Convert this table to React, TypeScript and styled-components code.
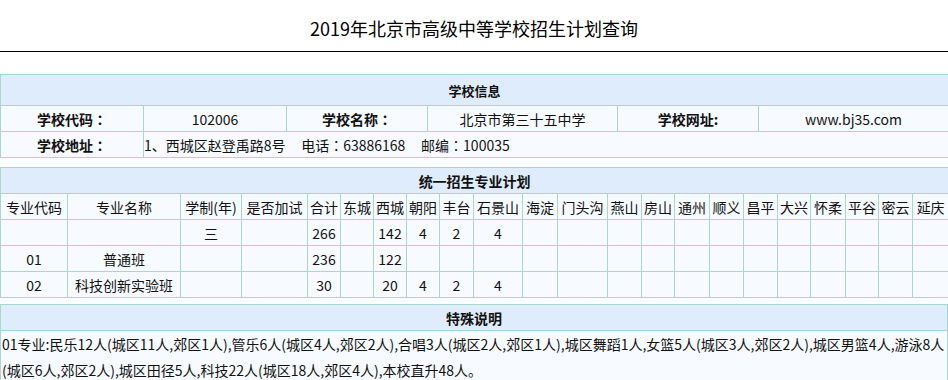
import React from "react";
import styled, { createGlobalStyle } from "styled-components";

const GlobalStyle = createGlobalStyle`
  html, body { margin: 0; padding: 0; background: #ffffff; }
  body {
    font-family: "Noto Sans CJK SC", "Microsoft YaHei", sans-serif;
    color: #111111;
  }
`;

const Page = styled.div`
  width: 948px;
  display: flex;
  flex-direction: column;
`;

const TitleBar = styled.h1`
  margin: 0;
  height: 52px;
  box-sizing: border-box;
  padding-top: 5px;
  display: flex;
  align-items: center;
  justify-content: center;
  font-size: 18px;
  font-weight: normal;
  color: #000;
  border-bottom: 1px solid #000;
`;

const Tables = styled.div`
  display: flex;
  flex-direction: column;
  padding-top: 22px;
`;

const Table = styled.table<{ $gap?: number }>`
  width: 948px;
  table-layout: fixed;
  border-collapse: collapse;
  margin-top: ${(p) => p.$gap ?? 0}px;
  font-size: 14px;
  background: #f7fbff;
`;

const HeadCell = styled.th<{ $h?: number; $fs?: number }>`
  height: ${(p) => p.$h ?? 25}px;
  padding: 0;
  background: #dfecfb;
  border: 1px solid #a9d6cd;
  font-size: ${(p) => p.$fs ?? 14}px;
  font-weight: bold;
  text-align: center;
  color: #111;
`;

const Cell = styled.td<{ $bold?: boolean; $align?: "left" | "center" }>`
  height: 25px;
  padding: 0;
  border: 1px solid #a9d6cd;
  text-align: ${(p) => p.$align ?? "center"};
  font-weight: ${(p) => (p.$bold ? "bold" : "normal")};
  white-space: nowrap;
  overflow: hidden;
  color: #111;
`;

/* full-width colon centred in its em box, as in the reference */
const Colon = styled.span`
  font-family: "Noto Sans CJK TC", "Noto Sans CJK SC", sans-serif;
`;

const NoteCell = styled.td`
  padding: 0 0 0 1px;
  border: 1px solid #a9d6cd;
  line-height: 26px;
  text-align: left;
  color: #111;
`;

const infoCols = [143, 143, 141, 190, 141, 190];
const planCols = [
  67, 113, 61, 66, 33, 33, 33, 33, 34, 49, 35, 50, 34, 33, 35, 34, 34, 33, 35,
  33, 34, 36,
];

const planHeaders = [
  "专业代码",
  "专业名称",
  "学制(年)",
  "是否加试",
  "合计",
  "东城",
  "西城",
  "朝阳",
  "丰台",
  "石景山",
  "海淀",
  "门头沟",
  "燕山",
  "房山",
  "通州",
  "顺义",
  "昌平",
  "大兴",
  "怀柔",
  "平谷",
  "密云",
  "延庆",
];

const planRows: string[][] = [
  ["", "", "三", "", "266", "", "142", "4", "2", "4"],
  ["01", "普通班", "", "", "236", "", "122", "", "", ""],
  ["02", "科技创新实验班", "", "", "30", "", "20", "4", "2", "4"],
];

const note =
  "01专业:民乐12人(城区11人,郊区1人),管乐6人(城区4人,郊区2人),合唱3人(城区2人,郊区1人),城区舞蹈1人,女篮5人(城区3人,郊区2人),城区男篮4人,游泳8人(城区6人,郊区2人),城区田径5人,科技22人(城区18人,郊区4人),本校直升48人。";

const Cols = ({ widths }: { widths: number[] }) => (
  <colgroup>
    {widths.map((w, i) => (
      <col key={i} style={{ width: w }} />
    ))}
  </colgroup>
);

const Gap = "\u00a0\u00a0\u00a0\u00a0\u00a0";

export default function App() {
  return (
    <Page>
      <GlobalStyle />
      <TitleBar>2019年北京市高级中等学校招生计划查询</TitleBar>
      <Tables>
        <Table>
          <Cols widths={infoCols} />
          <thead>
            <tr>
              <HeadCell colSpan={6} $h={30} $fs={13}>
                学校信息
              </HeadCell>
            </tr>
          </thead>
          <tbody>
            <tr>
              <Cell $bold>
                学校代码<Colon>：</Colon>
              </Cell>
              <Cell>102006</Cell>
              <Cell $bold>
                学校名称<Colon>：</Colon>
              </Cell>
              <Cell>北京市第三十五中学</Cell>
              <Cell $bold>学校网址:</Cell>
              <Cell>www.bj35.com</Cell>
            </tr>
            <tr>
              <Cell $bold>
                学校地址<Colon>：</Colon>
              </Cell>
              <Cell colSpan={5} $align="left">
                1、西城区赵登禹路8号{Gap}电话<Colon>：</Colon>63886168{Gap}邮编
                <Colon>：</Colon>100035
              </Cell>
            </tr>
          </tbody>
        </Table>

        <Table $gap={9}>
          <Cols widths={planCols} />
          <thead>
            <tr>
              <HeadCell colSpan={planCols.length}>统一招生专业计划</HeadCell>
            </tr>
          </thead>
          <tbody>
            <tr>
              {planHeaders.map((h) => (
                <Cell key={h}>{h}</Cell>
              ))}
            </tr>
            {planRows.map((row, r) => (
              <tr key={r}>
                {planHeaders.map((_, c) => (
                  <Cell key={c}>{row[c] ?? ""}</Cell>
                ))}
              </tr>
            ))}
          </tbody>
        </Table>

        <Table $gap={6}>
          <thead>
            <tr>
              <HeadCell>特殊说明</HeadCell>
            </tr>
          </thead>
          <tbody>
            <tr>
              <NoteCell>{note}</NoteCell>
            </tr>
          </tbody>
        </Table>
      </Tables>
    </Page>
  );
}
